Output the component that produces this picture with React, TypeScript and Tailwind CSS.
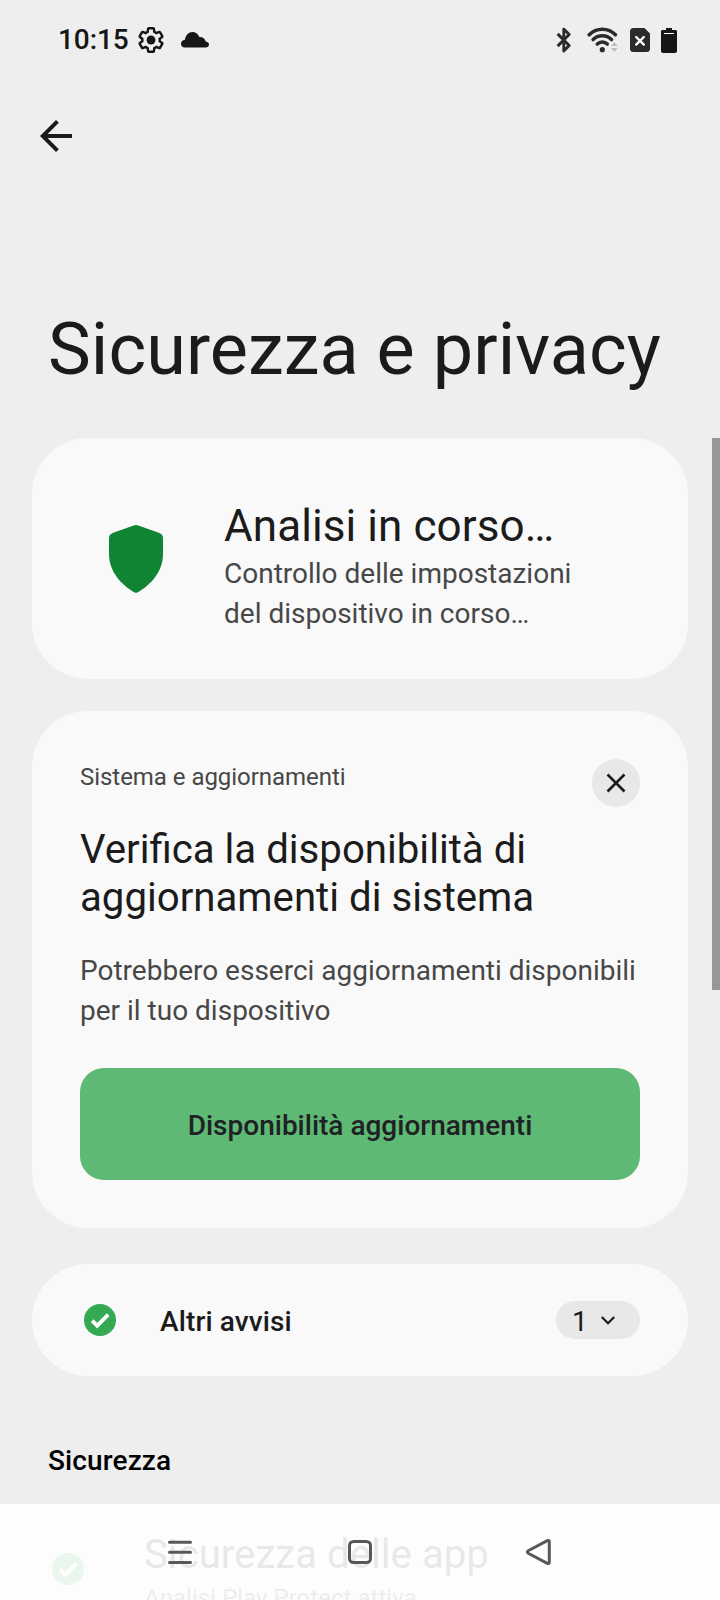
import type { ReactNode } from "react";
import { MdArrowBack } from "react-icons/md";

const GearIcon = () => (
  <svg width="28" height="28" viewBox="0 0 24 24" fill="none">
    <path
      d="M19.43 12.98c.04-.32.07-.64.07-.98s-.03-.66-.07-.98l2.11-1.65c.19-.15.24-.42.12-.64l-2-3.46c-.09-.16-.26-.25-.44-.25-.06 0-.12.01-.17.03l-2.49 1c-.52-.4-1.08-.73-1.69-.98l-.38-2.65C14.46 2.18 14.25 2 14 2h-4c-.25 0-.46.18-.49.42l-.38 2.65c-.61.25-1.17.59-1.69.98l-2.49-1c-.06-.02-.12-.03-.18-.03-.17 0-.34.09-.43.25l-2 3.46c-.13.22-.07.49.12.64l2.11 1.65c-.04.32-.07.65-.07.98s.03.66.07.98l-2.11 1.65c-.19.15-.24.42-.12.64l2 3.46c.09.16.26.25.44.25.06 0 .12-.01.17-.03l2.49-1c.52.4 1.08.73 1.69.98l.38 2.65c.03.24.24.42.49.42h4c.25 0 .46-.18.49-.42l.38-2.65c.61-.25 1.17-.59 1.69-.98l2.49 1c.06.02.12.03.18.03.17 0 .34-.09.43-.25l2-3.46c.12-.22.07-.49-.12-.64l-2.11-1.65z"
      stroke="#161616"
      strokeWidth="2.1"
    />
    <circle cx="12" cy="12" r="3.8" fill="#161616" />
  </svg>
);

const CloudIcon = () => (
  <svg width="28" height="16" viewBox="0 0 28 16" fill="#161616">
    <path d="M4 15.6C1.6 15.6 0 14 0 11.8C0 9.6 1.6 8 3.9 7.8C4.6 3.2 7.6 0 11.5 0C14.7 0 17.4 2 18.3 5C21.6 4.8 24.2 6.8 24.7 9.5C26.8 9.8 28 11 28 12.6C28 14.4 26.5 15.6 24.5 15.6Z" />
  </svg>
);

const BluetoothIcon = () => (
  <svg width="16" height="26" viewBox="0 0 16 26" fill="none">
    <path
      d="M1.6 6.9L13.2 18.5L7.8 23.9V2.1L13.2 7.5L1.6 19.1"
      stroke="#2b2b2b"
      strokeWidth="2.9"
      strokeLinejoin="round"
    />
  </svg>
);

const WifiIcon = () => (
  <svg width="31" height="26" viewBox="0 0 31 26" fill="none">
    <g stroke="#2b2b2b" strokeWidth="3.5" strokeLinecap="round">
      <path d="M2.2 7.8A18.2 18.2 0 0 1 28.4 7.8" />
      <path d="M6.1 12.6A13 13 0 0 1 24.5 12.6" />
      <path d="M10.3 17.1A7.2 7.2 0 0 1 20.3 17.1" />
    </g>
    <circle cx="15.3" cy="22.7" r="2.6" fill="#2b2b2b" />
    <path d="M24 19L27.3 15L30.6 19ZM24 21L27.3 25L30.6 21Z" fill="#bdbdbd" />
  </svg>
);

const SimIcon = () => (
  <svg width="20" height="24" viewBox="0 0 20 24" fill="none">
    <path
      d="M3.5 0H14.5L20 5.5V20.5A3.5 3.5 0 0 1 16.5 24H3.5A3.5 3.5 0 0 1 0 20.5V3.5A3.5 3.5 0 0 1 3.5 0Z"
      fill="#2b2b2b"
    />
    <path d="M6.2 9L13.8 16.6M13.8 9L6.2 16.6" stroke="#fff" strokeWidth="2.4" strokeLinecap="round" />
  </svg>
);

const BatteryIcon = () => (
  <svg width="16" height="25" viewBox="0 0 16 25" fill="none">
    <path d="M5 0H11V2H14A1.8 1.8 0 0 1 16 4V23A2 2 0 0 1 14 25H2A2 2 0 0 1 0 23V4A1.8 1.8 0 0 1 2 2H5Z" fill="#161616" />
    <path d="M3 5.5H13" stroke="#fff" strokeWidth="1" />
  </svg>
);

const ShieldIcon = () => (
  <svg width="54" height="68" viewBox="0 0 54 68" fill="#0f8533">
    <path d="M24.7.5Q27-.3 29.3.5L50.5 8.1Q54 9.6 54 13.5V29C54 46 42.5 59.5 28.8 67.2Q27 68.2 25.2 67.2C11.5 59.5 0 46 0 29V13.5Q0 9.6 3.5 8.1Z" />
  </svg>
);

const CheckIcon = () => (
  <svg width="32" height="32" viewBox="0 0 32 32" fill="none" className="shrink-0">
    <circle cx="16" cy="16" r="16" fill="#34a853" />
    <path d="M8.1 16.6L13.2 21.7L24.2 10.7" stroke="#fff" strokeWidth="3.8" />
  </svg>
);

const Card = ({ className, children }: { className: string; children: ReactNode }) => (
  <section className={`rounded-[56px] bg-[#f9f9f9] ${className}`}>{children}</section>
);

const StatusBar = () => (
  <div className="flex h-20 items-center justify-between pr-[43px] pl-[58px]">
    <div className="flex items-center">
      <span className="w-[79px] text-[28px] leading-10 font-medium tracking-[-0.1px] text-[#161616]">10:15</span>
      <GearIcon />
      <div className="pl-4">
        <CloudIcon />
      </div>
    </div>
    <div className="flex items-center">
      <BluetoothIcon />
      <div className="ml-[15px]">
        <WifiIcon />
      </div>
      <div className="ml-3">
        <SimIcon />
      </div>
      <div className="ml-[11px]">
        <BatteryIcon />
      </div>
    </div>
  </div>
);

const NavBar = () => (
  <nav className="absolute inset-x-0 bottom-0 grid h-24 grid-cols-3 items-center justify-items-center bg-white/90 px-[90px]">
    <svg width="24" height="24" viewBox="0 0 24 24" stroke="#585858" strokeWidth="3" strokeLinecap="round">
      <path d="M1.5 2.3H22.5M1.5 12.3H22.5M1.5 22.4H22.5" />
    </svg>
    <svg width="24" height="24" viewBox="0 0 24 24" stroke="#585858" strokeWidth="3" fill="none">
      <rect x="1.5" y="1.5" width="21" height="21" rx="4" />
    </svg>
    <svg width="30" height="28" viewBox="0 0 30 28" stroke="#585858" strokeWidth="3" strokeLinejoin="round" fill="none">
      <path d="M3.2 12.8L22.3 2.6Q24.3 1.8 24.3 4V24Q24.3 26.2 22.3 25.4L3.2 15.2Q1.6 14 3.2 12.8Z" />
    </svg>
  </nav>
);

const App = () => {
  return (
    <div className="relative h-[1600px] w-[720px] overflow-hidden bg-[#eeeeee] font-[Roboto,sans-serif] text-[#1b1b1b]">
      <StatusBar />
      <header className="pt-8">
        <button className="ml-8 block">
          <MdArrowBack size={48} />
        </button>
        <h1 className="mt-[148px] ml-12 text-[72px] leading-[84px] tracking-[0.06px] whitespace-nowrap">
          Sicurezza e privacy
        </h1>
      </header>

      <main className="mt-[46px] px-8">
        <Card className="flex h-[241px] pt-[62px] pl-[77px]">
          <div className="mt-[25px] w-[115px] shrink-0">
            <ShieldIcon />
          </div>
          <div>
            <h2 className="text-[44px] leading-[53px] tracking-[0.08px]">Analisi in corso…</h2>
            <p className="pt-px text-[28px] leading-10 text-[#474747]">
              Controllo delle impostazioni
              <br />
              del dispositivo in corso…
            </p>
          </div>
        </Card>

        <Card className="mt-8 h-[517px] p-12">
          <div className="flex h-[67px] justify-between">
            <span className="pt-0.5 text-2xl tracking-[-0.04px] text-[#474747]">Sistema e aggiornamenti</span>
            <button className="flex size-12 items-center justify-center rounded-full bg-[#e8e8e8]">
              <svg width="20" height="20" viewBox="0 0 20 20" stroke="#1b1b1b" strokeWidth="2.6">
                <path d="M1.5 1.5L18.5 18.5M18.5 1.5L1.5 18.5" />
              </svg>
            </button>
          </div>
          <h2 className="text-[40.2px] leading-[48px]">
            Verifica la disponibilità di
            <br />
            aggiornamenti di sistema
          </h2>
          <p className="mt-[29px] text-[28px] leading-10 whitespace-nowrap text-[#474747]">
            Potrebbero esserci aggiornamenti disponibili
            <br />
            per il tuo dispositivo
          </p>
          <button className="mt-[37px] h-28 w-full rounded-3xl bg-[#5db974] pt-[3px] text-[28px] font-medium text-[#202124]">
            Disponibilità aggiornamenti
          </button>
        </Card>

        <Card className="mt-9 flex h-28 items-center pr-12 pl-[52px]">
          <CheckIcon />
          <span className="ml-11 flex-1 pt-1 text-[28px] leading-10 font-medium tracking-[0.12px]">Altri avvisi</span>
          <div className="flex h-[38px] w-[84px] items-center rounded-full bg-[#e8e8e8] pl-4">
            <span className="w-[29px] pt-1 text-[28px] leading-9">1</span>
            <svg width="14" height="9" viewBox="0 0 14 9" fill="none" stroke="#1b1b1b" strokeWidth="2.2">
              <path d="M.8 1L7 7.2L13.2 1" />
            </svg>
          </div>
        </Card>

        <h3 className="mt-[65px] ml-4 text-[28px] leading-10 font-medium tracking-[0.12px] text-black">Sicurezza</h3>

        <div className="mt-[50px] ml-5 flex">
          <div className="pt-[22px]">
            <CheckIcon />
          </div>
          <div className="ml-[60px]">
            <div className="text-[40.2px] leading-[48px]">Sicurezza delle app</div>
            <div className="pt-[3px] text-2xl tracking-[0.04px] text-[#474747]">Analisi Play Protect attiva</div>
          </div>
        </div>
      </main>

      {/* scrollbar thumb */}
      <div className="absolute top-[438px] right-0 h-[552px] w-2 bg-[#979797]" />
      <NavBar />
    </div>
  );
};

export default App;
